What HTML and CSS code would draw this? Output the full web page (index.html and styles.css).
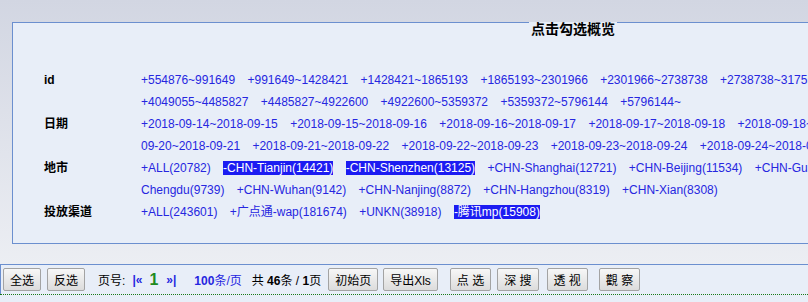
FILE: index.html
```html
<!DOCTYPE html>
<html lang="zh-CN">
<head>
<meta charset="UTF-8">
<meta name="viewport" content="width=device-width, initial-scale=1.0">
<title>点击勾选概览</title>
<link rel="stylesheet" href="styles.css">
</head>
<body>

<div class="wrap">
    <div class="panel">
        <div class="title">点击勾选概览</div>
        <div class="rows">
            <div class="label">id</div>
            <div class="cell">
                <div class="line">
                    <span class="opt">+554876~991649</span>
                    <span class="opt">+991649~1428421</span>
                    <span class="opt">+1428421~1865193</span>
                    <span class="opt">+1865193~2301966</span>
                    <span class="opt">+2301966~2738738</span>
                    <span class="opt">+2738738~3175510</span>
                    <span class="opt">+3175510~3612282</span>
                    <span class="opt">+3612282~4049055</span>
                </div>
                <div class="line">
                    <span class="opt">+4049055~4485827</span>
                    <span class="opt">+4485827~4922600</span>
                    <span class="opt">+4922600~5359372</span>
                    <span class="opt">+5359372~5796144</span>
                    <span class="opt">+5796144~</span>
                </div>
            </div>

            <div class="label">日期</div>
            <div class="cell">
                <div class="line">
                    <span class="opt">+2018-09-14~2018-09-15</span>
                    <span class="opt">+2018-09-15~2018-09-16</span>
                    <span class="opt">+2018-09-16~2018-09-17</span>
                    <span class="opt">+2018-09-17~2018-09-18</span>
                    <span class="opt">+2018-09-18~2018-09-19</span>
                    <span class="opt">+2018-09-19~2018-</span>
                </div>
                <div class="line">
                    <span class="opt">09-20~2018-09-21</span>
                    <span class="opt">+2018-09-21~2018-09-22</span>
                    <span class="opt">+2018-09-22~2018-09-23</span>
                    <span class="opt">+2018-09-23~2018-09-24</span>
                    <span class="opt">+2018-09-24~2018-09-25</span>
                </div>
            </div>

            <div class="label">地市</div>
            <div class="cell">
                <div class="line">
                    <span class="opt">+ALL(20782)</span>
                    <span class="opt on">-CHN-Tianjin(14421)</span>
                    <span class="opt on">-CHN-Shenzhen(13125)</span>
                    <span class="opt">+CHN-Shanghai(12721)</span>
                    <span class="opt">+CHN-Beijing(11534)</span>
                    <span class="opt">+CHN-Guangzhou(10962)</span>
                    <span class="opt">+CHN-</span>
                </div>
                <div class="line">
                    <span class="opt">Chengdu(9739)</span>
                    <span class="opt">+CHN-Wuhan(9142)</span>
                    <span class="opt">+CHN-Nanjing(8872)</span>
                    <span class="opt">+CHN-Hangzhou(8319)</span>
                    <span class="opt">+CHN-Xian(8308)</span>
                </div>
            </div>

            <div class="label">投放渠道</div>
            <div class="cell">
                <div class="line">
                    <span class="opt">+ALL(243601)</span>
                    <span class="opt">+广点通-wap(181674)</span>
                    <span class="opt">+UNKN(38918)</span>
                    <span class="opt on">-腾讯mp(15908)</span>
                </div>
            </div>
        </div>
    </div>
</div>

<div class="toolbar">
    <button class="btn">全选</button>
    <button class="btn m6">反选</button>
    <span class="pager-label">页号:</span>
    <span class="nav first">|«</span>
    <span class="cur">1</span>
    <span class="nav last">»|</span>
    <span class="per"><b>100</b>条/页</span>
    <span class="total">共 <b>46</b>条 / <b>1</b>页</span>
    <button class="btn m7">初始页</button>
    <button class="btn m5">导出Xls</button>
    <button class="btn m12">点 选</button>
    <button class="btn m6">深 搜</button>
    <button class="btn m8">透 视</button>
    <button class="btn m11">觀 察</button>
</div>
<div class="list"></div>

</body>
</html>
```

FILE: styles.css
```css
html, body {
    overflow: hidden;
}
body {
    margin: 0;
    height: 302px;
    font-family: "Liberation Sans", "Noto Sans CJK SC", sans-serif;
    font-size: 12px;
    color: #000;
    background: linear-gradient(#d2d6e2, #eceef3 265px);
}
.wrap {
    padding: 22px 0 0 12px;
}
.panel {
    width: 1400px;
    border: 1px solid #6b8fcf;
    background-color: #e8eef8;
    padding-bottom: 20px;
}
.title {
    width: fit-content;
    margin: -1px 0 0 516px;
    padding: 0 2px;
    background-color: #e8eef8;
    font-size: 14px;
    font-weight: bold;
    line-height: 15px;
}
.rows {
    display: grid;
    grid-template-columns: 128px 1fr;
    margin-top: 32px;
    line-height: 22px;
}
.label {
    padding-left: 31px;
    font-weight: bold;
}
.line {
    white-space: nowrap;
}
.opt {
    color: #2626e0;
    margin-right: 9px;
    cursor: pointer;
}
.opt.on {
    background-color: #1c1cf2;
    color: #fff;
}
.toolbar {
    display: flex;
    align-items: center;
    margin-top: 20px;
    padding: 3px 2px;
    border-top: 1px solid #6b8fcf;
    border-left: 1px solid #6b8fcf;
    background-color: #e8eef8;
}
.btn {
    height: 23px;
    padding: 0 6px;
    border: 1px solid #a3a3a3;
    border-radius: 2px;
    background: linear-gradient(#f7f7f7, #dcdcdc);
    font-family: "Liberation Sans", "Noto Sans CJK SC", sans-serif;
    font-size: 12px;
    color: #000;
    cursor: pointer;
}
.m5 { margin-left: 5px; }
.m6 { margin-left: 6px; }
.m7 { margin-left: 7px; }
.m8 { margin-left: 8px; }
.m11 { margin-left: 11px; }
.m12 { margin-left: 12px; }
.pager-label {
    margin-left: 13px;
}
.nav {
    color: #2626e0;
    font-weight: bold;
}
.first {
    margin-left: 7px;
}
.cur {
    margin-left: 7px;
    color: #1e8a1e;
    font-size: 16px;
    font-weight: bold;
}
.last {
    margin-left: 8px;
}
.per {
    margin-left: 18px;
    color: #2626e0;
}
.total {
    margin-left: 10px;
}
.list {
    border-top: 1px dotted #1a7a1a;
    height: 20px;
    background-color: #e8eef8;
}
```
